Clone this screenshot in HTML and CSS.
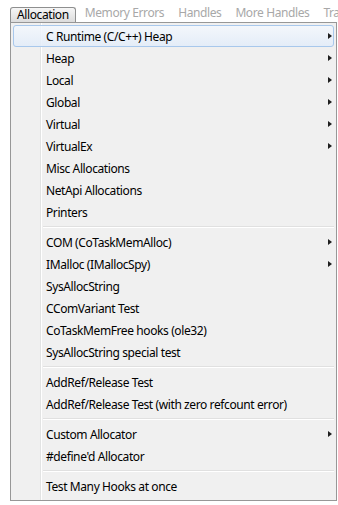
FILE: index.html
```html
<!DOCTYPE html>
<html>
<head>
<meta charset="utf-8">
<link rel="stylesheet" href="styles.css">
</head>
<body>
<div class="menubar">
  <span class="top-item active">Allocation</span>
  <span class="top-item">Memory Errors</span>
  <span class="top-item">Handles</span>
  <span class="top-item">More Handles</span>
  <span class="top-item">Tra</span>
</div>
<div class="dropdown">
  <div class="item hot"><span>C Runtime (C/C++) Heap</span><i class="arrow"></i></div>
  <div class="item"><span>Heap</span><i class="arrow"></i></div>
  <div class="item"><span>Local</span><i class="arrow"></i></div>
  <div class="item"><span>Global</span><i class="arrow"></i></div>
  <div class="item"><span>Virtual</span><i class="arrow"></i></div>
  <div class="item"><span>VirtualEx</span><i class="arrow"></i></div>
  <div class="item"><span>Misc Allocations</span></div>
  <div class="item"><span>NetApi Allocations</span></div>
  <div class="item"><span>Printers</span></div>
  <div class="sep"></div>
  <div class="item"><span>COM (CoTaskMemAlloc)</span><i class="arrow"></i></div>
  <div class="item"><span>IMalloc (IMallocSpy)</span><i class="arrow"></i></div>
  <div class="item"><span>SysAllocString</span></div>
  <div class="item"><span>CComVariant Test</span></div>
  <div class="item"><span>CoTaskMemFree hooks (ole32)</span></div>
  <div class="item"><span>SysAllocString special test</span></div>
  <div class="sep"></div>
  <div class="item"><span>AddRef/Release Test</span></div>
  <div class="item"><span>AddRef/Release Test (with zero refcount error)</span></div>
  <div class="sep"></div>
  <div class="item"><span>Custom Allocator</span><i class="arrow"></i></div>
  <div class="item"><span>#define'd Allocator</span></div>
  <div class="sep"></div>
  <div class="item"><span>Test Many Hooks at once</span></div>
</div>
</body>
</html>
```
FILE: styles.css
```css
html, body {
  margin: 0;
  padding: 0;
  background: #ffffff;
  font-family: "Noto Sans", "DejaVu Sans", sans-serif;
  font-size: 12px;
  letter-spacing: -0.4px;
  color: #000;
  overflow: hidden;
}
.menubar {
  display: flex;
  align-items: flex-end;
  height: 22px;
  padding-left: 10px;
  white-space: nowrap;
  overflow: hidden;
}
.top-item {
  color: #a8a8a8;
  padding: 0 7px 0 7px;
  height: 15px;
  line-height: 14px;
  margin-bottom: 1px;
}
.top-item.active {
  color: #000;
  height: 14px;
  padding: 0 6px;
  margin-right: 2px;
  margin-bottom: 0;
  border: 1px solid #8e8f8f;
  border-bottom: none;
  border-radius: 3px 3px 0 0;
  background: linear-gradient(#f6f6f6, #dcdcdc);
  line-height: 14px;
}
.dropdown {
  margin-left: 10px;
  width: 327px;
  box-sizing: border-box;
  height: 479px;
  border: 1px solid #979797;
  background-color: #f0f0f0;
  background-image: linear-gradient(90deg, transparent 29px, #e2e3e3 29px, #e2e3e3 30px, #ffffff 30px, #ffffff 31px, transparent 31px);
  padding: 2px 2px 3px 2px;
}
.item {
  display: flex;
  align-items: center;
  justify-content: space-between;
  height: 22px;
  box-sizing: border-box;
  padding: 0 1px 0 32px;
  border: 1px solid transparent;
  border-radius: 3px;
}
.item span {
  line-height: 16px;
  padding-top: 1px;
}
.item.hot {
  border-color: #a8c8ec;
  background: linear-gradient(rgba(244,248,253,0.85), rgba(226,236,249,0.85));
}
.arrow {
  width: 0;
  height: 0;
  border-top: 3.5px solid transparent;
  border-bottom: 3.5px solid transparent;
  border-left: 4px solid #1e1e1e;
}
.sep {
  height: 8px;
  box-sizing: border-box;
  margin-left: 30px;
  padding-top: 3px;
}
.sep::after {
  content: "";
  display: block;
  height: 1px;
  border-top: 1px solid #e0e0e0;
  background: #ffffff;
}
```
